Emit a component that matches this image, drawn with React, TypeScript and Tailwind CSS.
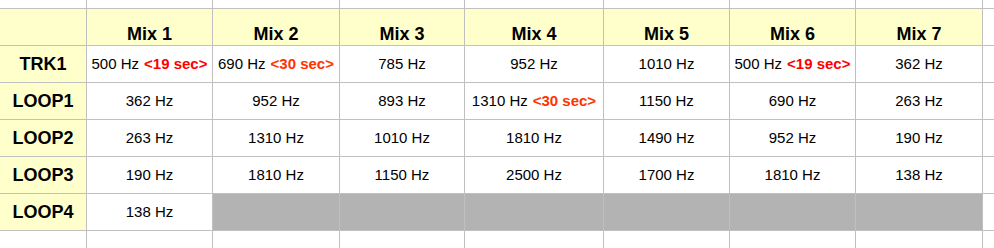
import React from "react";

type Cell = { hz: string; tag?: string; tone?: "red" | "orange" };

const mixes = ["Mix 1", "Mix 2", "Mix 3", "Mix 4", "Mix 5", "Mix 6", "Mix 7"];

const rows: { name: string; cells: (Cell | null)[] }[] = [
  {
    name: "TRK1",
    cells: [
      { hz: "500 Hz", tag: "<19 sec>", tone: "red" },
      { hz: "690 Hz", tag: "<30 sec>", tone: "orange" },
      { hz: "785 Hz" },
      { hz: "952 Hz" },
      { hz: "1010 Hz" },
      { hz: "500 Hz", tag: "<19 sec>", tone: "red" },
      { hz: "362 Hz" },
    ],
  },
  {
    name: "LOOP1",
    cells: [
      { hz: "362 Hz" },
      { hz: "952 Hz" },
      { hz: "893 Hz" },
      { hz: "1310 Hz", tag: "<30 sec>", tone: "orange" },
      { hz: "1150 Hz" },
      { hz: "690 Hz" },
      { hz: "263 Hz" },
    ],
  },
  {
    name: "LOOP2",
    cells: [
      { hz: "263 Hz" },
      { hz: "1310 Hz" },
      { hz: "1010 Hz" },
      { hz: "1810 Hz" },
      { hz: "1490 Hz" },
      { hz: "952 Hz" },
      { hz: "190 Hz" },
    ],
  },
  {
    name: "LOOP3",
    cells: [
      { hz: "190 Hz" },
      { hz: "1810 Hz" },
      { hz: "1150 Hz" },
      { hz: "2500 Hz" },
      { hz: "1700 Hz" },
      { hz: "1810 Hz" },
      { hz: "138 Hz" },
    ],
  },
  {
    name: "LOOP4",
    cells: [{ hz: "138 Hz" }, null, null, null, null, null, null],
  },
];

function Blank() {
  return <div className="bg-white" />;
}

export default function App() {
  return (
    <div
      className="grid w-[994px] h-[248px] overflow-hidden bg-[#c0c0c0] gap-px grid-cols-[86px_125px_126px_124px_138px_125px_125px_126px_11px] grid-rows-[8px_36px_36px_36px_36px_36px_36px_17px] text-black"
      style={{ fontFamily: '"Liberation Sans", Arial, sans-serif' }}
    >
      {/* top strip */}
      {Array.from({ length: 9 }).map((_, i) => (
        <Blank key={`t${i}`} />
      ))}

      {/* header row */}
      <div className="bg-[#ffffcc]" />
      {mixes.map((m) => (
        <div
          key={m}
          className="bg-[#ffffcc] flex items-end justify-center pb-[2px] text-[18px] font-bold leading-none"
        >
          {m}
        </div>
      ))}
      <Blank />

      {rows.map((r) => (
        <React.Fragment key={r.name}>
          <div className="bg-[#ffffcc] flex items-center justify-center text-[18px] font-bold">
            {r.name}
          </div>
          {r.cells.map((c, i) =>
            c ? (
              <div
                key={i}
                className="bg-white flex items-center justify-center text-[15px] whitespace-nowrap"
              >
                {c.hz}
                {c.tag && (
                  <span
                    className={`ml-[5px] font-bold ${c.tone === "red" ? "text-[#ff0000]" : "text-[#ff3300]"}`}
                  >
                    {c.tag}
                  </span>
                )}
              </div>
            ) : (
              <div key={i} className="bg-[#b3b3b3]" />
            )
          )}
          <Blank />
        </React.Fragment>
      ))}

      {/* bottom strip */}
      {Array.from({ length: 9 }).map((_, i) => (
        <Blank key={`b${i}`} />
      ))}
    </div>
  );
}
